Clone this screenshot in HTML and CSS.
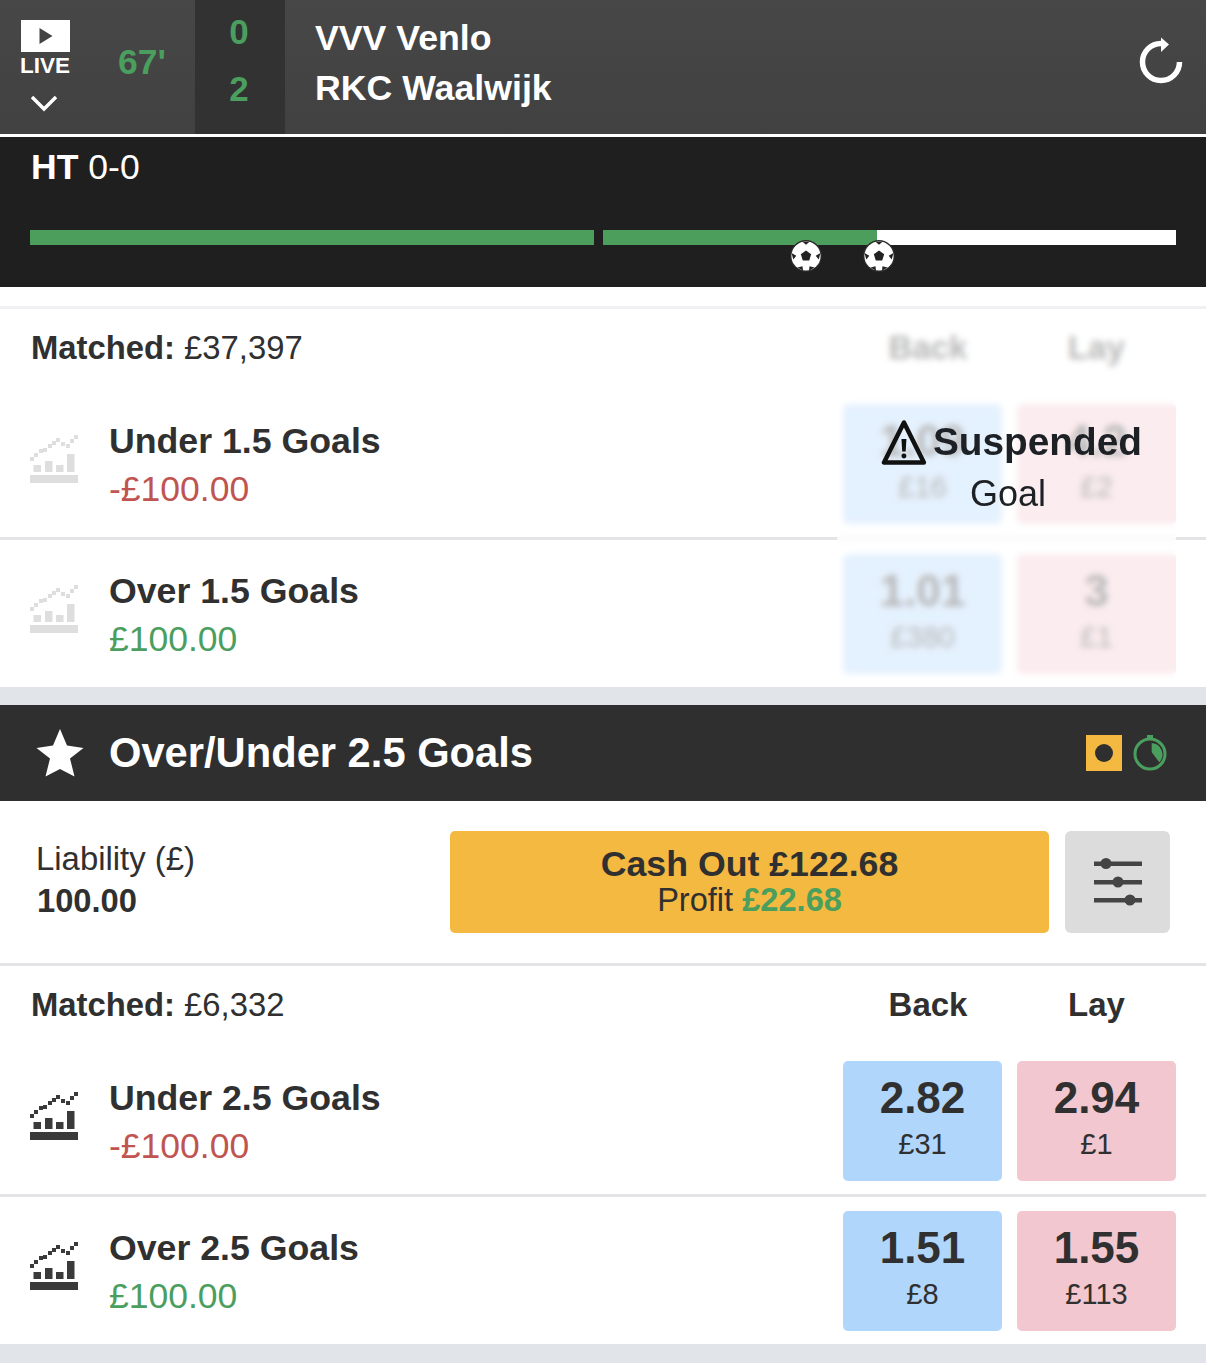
FILE: index.html
```html
<!DOCTYPE html>
<html lang="en">
<head>
    <meta charset="UTF-8">
    <meta name="viewport" content="width=device-width, initial-scale=1.0">
    <title>VVV Venlo v RKC Waalwijk</title>
    <link rel="stylesheet" href="styles.css">
</head>
<body>
    <svg class="defs" width="0" height="0">
        <symbol id="chart" viewBox="0 0 48 48">
            <path d="M0 22h4v4h-4zM4 18h4v4h-4zM9 14h4v4h-4zM13 13h4v4h-4zM18 9h4v4h-4zM22 6h4v4h-4zM26 3h4v4h-4zM31 7h4v4h-4zM36 9h4v4h-4zM40 4h4v4h-4zM44 0h4v4h-4z"/>
            <rect x="3.500" y="30" width="7.500" height="7"/>
            <rect x="15" y="26" width="7.500" height="11"/>
            <rect x="26" y="30" width="7.500" height="7"/>
            <rect x="37" y="19" width="7.500" height="18"/>
            <rect x="0" y="40" width="48" height="8"/>
        </symbol>
        <symbol id="ball" viewBox="0 0 32 32">
            <circle cx="16" cy="16" r="16" fill="#2b2b2b"/>
            <circle cx="16" cy="16" r="14.600" fill="#fff"/>
            <path d="M16 10.500l5.200 3.800-2 6.200h-6.400l-2-6.200z" fill="#222"/>
            <path d="M12.500 1.800h7L16 4.800zM30.500 13l-1.800 6.500-3-3.800zM1.500 13l1.800 6.500 3-3.800zM24.500 27.500l-5.500 3.200 .5-4.500zM7.500 27.500l5.500 3.200-.5-4.500z" fill="#222"/>
        </symbol>
    </svg>

    <header class="match">
        <div class="live">
            <span class="tv">
                <svg width="16" height="16" viewBox="0 0 16 16"><path d="M1.500 0l13 8-13 8z" fill="#444"/></svg>
            </span>
            <span class="live-label">LIVE</span>
            <svg class="chevron" width="28" height="18" viewBox="0 0 28 18"><path d="M2 3l12 12L26 3" fill="none" stroke="#fff" stroke-width="3.400"/></svg>
        </div>
        <div class="clock">67'</div>
        <div class="score"><span>0</span><span>2</span></div>
        <div class="teams"><span>VVV Venlo</span><span>RKC Waalwijk</span></div>
        <svg class="refresh" width="46" height="50" viewBox="0 0 46 50">
            <path d="M41.500 26A18.500 18.500 0 1 1 23 7.500h2" fill="none" stroke="#fff" stroke-width="5.500"/>
            <path d="M23 1.500l8 7-8 7.500z" fill="#fff"/>
        </svg>
    </header>

    <section class="timeline">
        <div class="halftime"><b>HT</b> 0-0</div>
        <div class="bar">
            <div class="half"></div>
            <div class="half second"><div class="played" style="width: 47.8%"></div></div>
            <svg class="ball ball-one"><use href="#ball"/></svg>
            <svg class="ball ball-two"><use href="#ball"/></svg>
        </div>
    </section>

    <section class="market first">
        <div class="matched-row">
            <div class="matched"><b>Matched:</b> £37,397</div>
            <div class="col-label back-label">Back</div>
            <div class="col-label lay-label">Lay</div>
        </div>
        <div class="runner">
            <svg class="chart faded"><use href="#chart"/></svg>
            <div class="runner-info">
                <div class="name">Under 1.5 Goals</div>
                <div class="pnl loss">-£100.00</div>
            </div>
            <div class="price back"><b>1.09</b><span>£16</span></div>
            <div class="price lay"><b>4.2</b><span>£2</span></div>
        </div>
        <div class="runner">
            <svg class="chart faded"><use href="#chart"/></svg>
            <div class="runner-info">
                <div class="name">Over 1.5 Goals</div>
                <div class="pnl win">£100.00</div>
            </div>
            <div class="price back"><b>1.01</b><span>£380</span></div>
            <div class="price lay"><b>3</b><span>£1</span></div>
        </div>
        <div class="suspended">
            <div class="suspended-title">
                <svg width="46" height="46" viewBox="0 0 46 46"><path d="M23 3.500L3 43.500h40z" fill="none" stroke="#111" stroke-width="4.500" stroke-linejoin="round"/><path d="M20.500 20h5l-.8 12.500h-3.400z" fill="#111"/><circle cx="23" cy="37" r="2.500" fill="#111"/></svg>
                <b>Suspended</b>
            </div>
            <div class="suspended-reason">Goal</div>
        </div>
    </section>

    <div class="band"></div>

    <section class="market-head">
        <svg class="star" width="48" height="48" viewBox="0 0 48 48"><path d="M24 0l7 16.500L47.500 19 34 29.500l4.500 18L24 40 9.500 47.500 14 29.500 .5 19 17 16.500z" fill="#fff"/></svg>
        <h2>Over/Under 2.5 Goals</h2>
        <span class="inplay"><i></i></span>
        <svg class="timer" width="34" height="36" viewBox="0 0 34 36">
            <rect x="14" y="0" width="6" height="4" fill="#4a9e5e"/>
            <circle cx="17" cy="19" r="15" fill="none" stroke="#4a9e5e" stroke-width="3"/>
            <path d="M18.700 8A11.500 11.500 0 0 1 26.300 27.300L18.700 17.300z" fill="#4a9e5e"/>
        </svg>
    </section>

    <section class="cashout">
        <div class="liability">
            <span>Liability (£)</span>
            <b>100.00</b>
        </div>
        <div class="cashout-btn">
            <b>Cash Out £122.68</b>
            <span>Profit <b class="win">£22.68</b></span>
        </div>
        <div class="settings">
            <svg width="48" height="48" viewBox="0 0 48 48">
                <g fill="#444">
                    <rect y="3.500" width="48" height="4.500"/><circle cx="12" cy="5.500" r="5.500"/>
                    <rect y="22" width="48" height="4.500"/><circle cx="24" cy="24" r="5.500"/>
                    <rect y="40" width="48" height="4.500"/><circle cx="36" cy="42" r="5.500"/>
                </g>
            </svg>
        </div>
    </section>

    <section class="market">
        <div class="matched-row">
            <div class="matched"><b>Matched:</b> £6,332</div>
            <div class="col-label back-label">Back</div>
            <div class="col-label lay-label">Lay</div>
        </div>
        <div class="runner">
            <svg class="chart"><use href="#chart"/></svg>
            <div class="runner-info">
                <div class="name">Under 2.5 Goals</div>
                <div class="pnl loss">-£100.00</div>
            </div>
            <div class="price back"><b>2.82</b><span>£31</span></div>
            <div class="price lay"><b>2.94</b><span>£1</span></div>
        </div>
        <div class="runner">
            <svg class="chart"><use href="#chart"/></svg>
            <div class="runner-info">
                <div class="name">Over 2.5 Goals</div>
                <div class="pnl win">£100.00</div>
            </div>
            <div class="price back"><b>1.51</b><span>£8</span></div>
            <div class="price lay"><b>1.55</b><span>£113</span></div>
        </div>
    </section>

    <div class="band"></div>
</body>
</html>
```

FILE: styles.css
```css
* { margin: 0; padding: 0; box-sizing: border-box; }
body {
    font-family: 'Liberation Sans', Arial, sans-serif;
    background: #fff;
    color: #303030;
    overflow: hidden;
}
.defs { position: absolute; }
.win { color: #4a9e5e; }
.loss { color: #c0544f; }

/* match header */
.match {
    display: flex;
    align-items: center;
    height: 134px;
    background: linear-gradient(#474747, #414141);
    color: #fff;
}
.live {
    display: flex;
    flex-direction: column;
    align-items: center;
    width: 50px;
    margin-left: 20px;
    margin-bottom: 2px;
}
.tv {
    display: flex;
    align-items: center;
    justify-content: center;
    width: 49px;
    height: 32px;
    padding-left: 2px;
    background: #fff;
}
.live-label {
    font-size: 22.500px;
    font-weight: 700;
    line-height: 24px;
    margin-top: 2px;
}
.chevron { margin-top: 16px; margin-left: -3px; }
.clock {
    width: 125px;
    margin-bottom: 10px;
    padding-left: 48px;
    color: #4a9e5e;
    font-size: 35.500px;
    font-weight: 700;
}
.score {
    display: flex;
    flex-direction: column;
    justify-content: space-around;
    align-items: center;
    width: 90px;
    height: 100%;
    padding: 3px 2px 17px 0;
    background: #323232;
    color: #4a9e5e;
    font-size: 35px;
    font-weight: 700;
}
.teams {
    display: flex;
    flex-direction: column;
    flex: 1;
    padding-left: 30px;
    font-size: 35.700px;
    font-weight: 700;
    line-height: 50px;
    margin-bottom: 8px;
}
.refresh { margin-right: 22px; margin-top: -12px; }

/* timeline */
.timeline {
    height: 150px;
    margin-top: 3px;
    padding: 0 30px;
    background: #1f1f1f;
    color: #fff;
}
.halftime {
    height: 60px;
    padding-left: 1px;
    font-size: 35.600px;
    line-height: 60px;
}
.bar {
    position: relative;
    display: flex;
    gap: 9px;
    margin-top: 33px;
}
.half {
    flex: 564px 0 0;
    height: 15px;
    background: #4c9e5d;
}
.half.second { flex: 1; background: #fff; }
.played { height: 100%; background: #4c9e5d; }
.ball { position: absolute; top: 10px; width: 32px; height: 32px; }
.ball-one { left: 760px; }
.ball-two { left: 833px; }

/* markets */
.market { position: relative; }
.market.first {
    margin-top: 19px;
    border-top: 3px solid #f1f1f4;
}
.matched-row {
    display: flex;
    align-items: center;
    height: 81px;
    padding: 0 30px 4px 31px;
    font-size: 32.800px;
}
.matched { flex: 1; }
.col-label { font-size: 33px; font-weight: 700; text-align: center; }
.back-label { width: 159px; margin-right: 15px; padding-left: 11px; }
.lay-label { width: 159px; }
.runner {
    display: flex;
    align-items: center;
    padding: 14px 30px 13px;
}
.runner + .runner { border-top: 3px solid #e4e4e6; }
.chart { width: 48px; height: 48px; fill: #3a3a3a; margin-top: -11px; }
.chart.faded { fill: #dedede; }
.runner-info { flex: 1; margin-left: 31px; margin-top: 2px; }
.name { font-size: 35.700px; font-weight: 700; line-height: 48px; }
.pnl { font-size: 35.500px; line-height: 48px; }
.price {
    display: flex;
    flex-direction: column;
    align-items: center;
    width: 159px;
    height: 120px;
    padding-top: 13px;
    border-radius: 5px;
    font-size: 29px;
}
.price b { font-size: 44px; line-height: 48px; }
.price span { line-height: 36px; margin-top: 4px; }
.price.back { background: #b1d6fb; margin-right: 15px; }
.price.lay { background: #f2c7cf; }

/* suspended overlay */
.suspended {
    position: absolute;
    top: 0;
    right: 30px;
    bottom: 0;
    width: 339px;
    padding: 110px 34px 0 44px;
    background: rgba(255, 255, 255, 0.66);
    -webkit-backdrop-filter: blur(3px);
    backdrop-filter: blur(3px);
    color: #1d2024;
    text-align: center;
}
.suspended-title {
    display: flex;
    align-items: center;
    gap: 6px;
    height: 46px;
    font-size: 38.800px;
}
.suspended-reason {
    margin: 4px 0 0 -7px;
    font-size: 36px;
    line-height: 50px;
}

.band { height: 18px; background: #e1e4e9; }
.band:last-child { height: 20px; }

/* market header */
.market-head {
    display: flex;
    align-items: center;
    height: 96px;
    padding: 0 39px 0 36px;
    background: #2f2f2f;
    color: #fff;
}
.market-head h2 {
    flex: 1;
    margin-left: 25px;
    font-size: 41.700px;
    font-weight: 700;
}
.inplay {
    display: flex;
    align-items: center;
    justify-content: center;
    width: 36px;
    height: 36px;
    background: #f4b940;
}
.inplay i {
    width: 18px;
    height: 18px;
    border-radius: 50%;
    background: #2f2f2f;
}
.timer { margin-left: 11px; }

/* cash out */
.cashout {
    display: flex;
    align-items: center;
    height: 165px;
    padding: 0 36px 1px 36px;
    border-bottom: 3px solid #e4e4e6;
}
.liability {
    display: flex;
    flex-direction: column;
    width: 414px;
    margin-top: -4px;
    font-size: 32.900px;
    line-height: 42px;
}
.liability b { padding-left: 1px; font-size: 32.700px; }
.cashout-btn {
    display: flex;
    flex-direction: column;
    align-items: center;
    justify-content: center;
    width: 599px;
    height: 102px;
    border-radius: 5px;
    background: #f4b940;
    font-size: 32.600px;
    line-height: 36px;
}
.cashout-btn > b { font-size: 35.700px; }
.settings {
    display: flex;
    align-items: center;
    justify-content: center;
    width: 105px;
    height: 102px;
    margin-left: 16px;
    border-radius: 6px;
    background: #dcdcdc;
}
```
